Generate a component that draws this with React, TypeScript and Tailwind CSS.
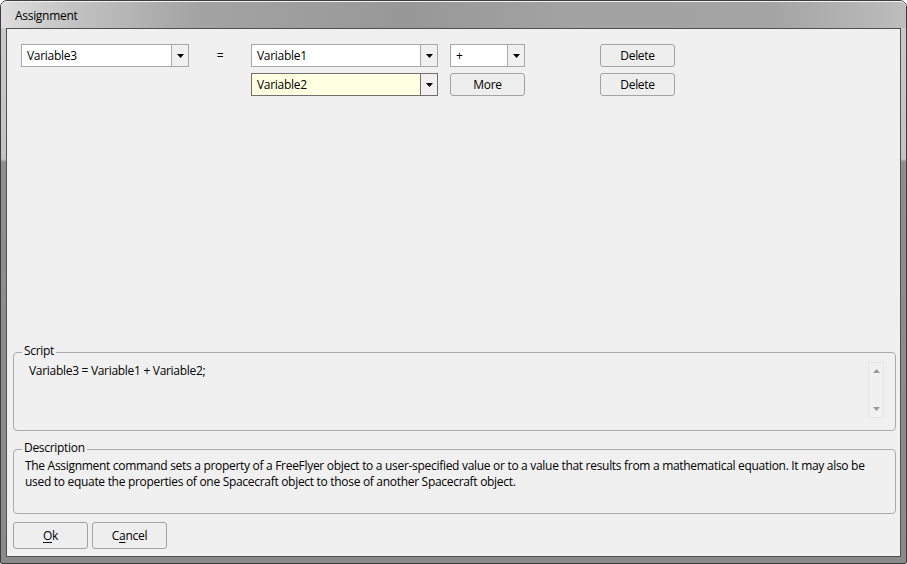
import React from "react";

function Arrow({ color = "#000000" }: { color?: string }) {
  return (
    <svg width="7" height="4" viewBox="0 0 7 4">
      <polygon points="0,0 7,0 3.5,4" fill={color} />
    </svg>
  );
}

function ArrowUp() {
  return (
    <svg width="7" height="4" viewBox="0 0 7 4">
      <polygon points="0,4 7,4 3.5,0" fill="#9a9a9a" />
    </svg>
  );
}

type ComboProps = {
  value: string;
  width: string;
  active?: boolean;
};

function Combo({ value, width, active }: ComboProps) {
  return (
    <div
      className={`flex h-[23px] ${width} border ${
        active ? "border-[#707070] bg-[#ffffe1]" : "border-[#a7a7a7] bg-white"
      }`}
    >
      <div className="flex-1 whitespace-nowrap pl-[5px] leading-[22px]">{value}</div>
      <div
        className={`flex w-[17px] items-center justify-center border-l bg-[#f0f0f0] ${
          active ? "border-[#707070]" : "border-[#a7a7a7]"
        }`}
      >
        <Arrow />
      </div>
    </div>
  );
}

function Button({ children, height = "h-[23px]" }: { children: React.ReactNode; height?: string }) {
  return (
    <button
      className={`flex ${height} w-[75px] items-center justify-center rounded-[3px] border border-[#a3a3a3] bg-[#eeeeee] leading-[16px]`}
    >
      {children}
    </button>
  );
}

export default function App() {
  return (
    <div className="h-[564px] w-[907px] bg-white font-['Open_Sans','Noto_Sans',sans-serif] text-[12px] tracking-[-0.3px] text-black">
      <div className="flex h-full flex-col rounded-t-[7px] rounded-b-[2px] border border-[#3d3d3d] bg-[linear-gradient(to_bottom,#cbcbcb_0px,#c3c3c3_158px,#8e8e8e_161px,#8a8a8a_100%)] pb-[6px]">
        <div className="h-[27px] rounded-t-[6px] border-t border-[#f2f2f2] bg-[linear-gradient(to_right,#dedede_0%,#c2c2c2_8%,#a3a3a3_22%,#989898_45%,#a2a2a2_62%,#a4a4a4_85%,#bdbdbd_100%)] pl-[14px] pt-[6px] leading-[16px]">
          Assignment
        </div>

        <div className="mx-[5px] flex flex-1 flex-col border border-[#4f4f4f] bg-[#f0f0f0]">
          <div className="flex flex-col gap-[6px] pl-[14px] pt-[15px]">
            <div className="flex items-center">
              <Combo value="Variable3" width="w-[168px]" />
              <div className="w-[62px] text-center leading-[23px]">=</div>
              <Combo value="Variable1" width="w-[187px]" />
              <div className="ml-[12px]">
                <Combo value="+" width="w-[75px]" />
              </div>
              <div className="ml-[75px]">
                <Button>Delete</Button>
              </div>
            </div>
            <div className="flex items-center">
              <div className="w-[230px]" />
              <Combo value="Variable2" width="w-[187px]" active />
              <div className="ml-[12px]">
                <Button>More</Button>
              </div>
              <div className="ml-[75px]">
                <Button>Delete</Button>
              </div>
            </div>
          </div>

          <div className="flex-1" />

          <div className="relative ml-[6px] mr-[4px] flex h-[79px] rounded-[4px] border border-[#ababab]">
            <span className="absolute -top-[10px] left-[8px] bg-[#f0f0f0] px-[2px] leading-[16px]">Script</span>
            <div className="flex-1 whitespace-nowrap pl-[15px] pt-[10px] leading-[16px]">
              Variable3 = Variable1 + Variable2;
            </div>
            <div className="mr-[11px] mt-[9px] flex h-[56px] w-[16px] flex-col items-center justify-between border border-[#e6e6e6] py-[6px]">
              <ArrowUp />
              <Arrow color="#9a9a9a" />
            </div>
          </div>

          <div className="relative ml-[6px] mr-[4px] mt-[18px] h-[65px] rounded-[4px] border border-[#ababab]">
            <span className="absolute -top-[10px] left-[8px] bg-[#f0f0f0] px-[2px] leading-[16px]">Description</span>
            <div className="whitespace-nowrap pl-[11px] pt-[8px] leading-[16px]">
              The Assignment command sets a property of a FreeFlyer object to a user-specified value or to a value that results from a mathematical equation. It may also be
              <br />
              used to equate the properties of one Spacecraft object to those of another Spacecraft object.
            </div>
          </div>

          <div className="ml-[6px] mt-[8px] flex gap-[4px] pb-[7px]">
            <Button height="h-[27px]">
              <span className="underline underline-offset-2">O</span>k
            </Button>
            <Button height="h-[27px]">
              C<span className="underline underline-offset-2">a</span>ncel
            </Button>
          </div>
        </div>
      </div>
    </div>
  );
}
